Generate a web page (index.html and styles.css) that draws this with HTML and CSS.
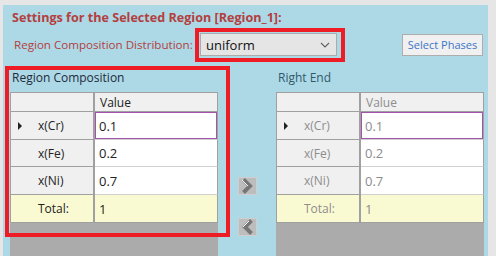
FILE: index.html
```html
<!DOCTYPE html>
<html lang="en">
<head>
    <meta charset="UTF-8">
    <title>Region Settings</title>
    <link rel="stylesheet" href="styles.css">
</head>
<body>
    <div class="window">
        <div class="panel">
            <div class="title">Settings for the Selected Region [Region_1]:</div>

            <div class="dist-row">
                <span class="dist-label">Region Composition Distribution:</span>
                <div class="select">
                    <span>uniform</span>
                    <svg width="10" height="6" viewBox="0 0 10 6"><path d="M1 1 L5 5 L9 1" fill="none" stroke="#606060" stroke-width="1.1"/></svg>
                </div>
                <button class="phases">Select Phases</button>
            </div>

            <div class="regions">
                <div class="group">
                    <div class="group-label">Region Composition</div>
                    <div class="grid">
                        <div class="table">
                            <div class="hd corner"></div>
                            <div class="hd">Value</div>

                            <div class="rh"><span class="marker on"></span>x(Cr)</div>
                            <div class="val focus">0.1</div>
                            <div class="rh"><span class="marker"></span>x(Fe)</div>
                            <div class="val">0.2</div>
                            <div class="rh"><span class="marker"></span>x(Ni)</div>
                            <div class="val">0.7</div>
                            <div class="rh total"><span class="marker"></span>Total:</div>
                            <div class="val total">1</div>
                        </div>
                    </div>
                </div>

                <div class="arrows">
                    <svg class="arrow" width="19" height="18" viewBox="0 0 19 18">
                        <rect x="0.5" y="0.5" width="18" height="17" fill="#bdbdbd" stroke="#cfcfcf"/>
                        <path d="M5.5 2.5 L12 9 L5.5 15.5" fill="none" stroke="#767676" stroke-width="4"/>
                        <path d="M4 3 L10 9" fill="none" stroke="#f4f4f4" stroke-width="1"/>
                    </svg>
                    <svg class="arrow" width="19" height="18" viewBox="0 0 19 18">
                        <rect x="0.5" y="0.5" width="18" height="17" fill="#bdbdbd" stroke="#cfcfcf"/>
                        <path d="M13.5 2.5 L7 9 L13.5 15.5" fill="none" stroke="#767676" stroke-width="4"/>
                        <path d="M5 9 L11 3" fill="none" stroke="#f4f4f4" stroke-width="1"/>
                    </svg>
                </div>

                <div class="group right">
                    <div class="group-label">Right End</div>
                    <div class="grid">
                        <div class="table">
                            <div class="hd corner"></div>
                            <div class="hd">Value</div>

                            <div class="rh"><span class="marker on"></span>x(Cr)</div>
                            <div class="val focus">0.1</div>
                            <div class="rh"><span class="marker"></span>x(Fe)</div>
                            <div class="val">0.2</div>
                            <div class="rh"><span class="marker"></span>x(Ni)</div>
                            <div class="val">0.7</div>
                            <div class="rh total"><span class="marker"></span>Total:</div>
                            <div class="val total">1</div>
                        </div>
                    </div>
                </div>
            </div>

            <!-- red highlight boxes drawn over the form -->
            <div class="mark mark-select"></div>
            <div class="mark mark-left"></div>
        </div>
    </div>
</body>
</html>
```

FILE: styles.css
```css
body {
    margin: 0;
    background: #e6e6e6;
    font-family: "Open Sans", "Noto Sans", sans-serif;
}

.window {
    width: 496px;
    height: 256px;
    box-sizing: border-box;
    padding: 5px 8px 0 3px;
    overflow: hidden;
}

.panel {
    position: relative;
    height: 100%;
    background: #add8e6;
}

.title {
    padding: 5px 0 0 9px;
    font-size: 12.6px;
    font-weight: 700;
    line-height: 16px;
    color: #b3403e;
}

.dist-row {
    display: flex;
    align-items: center;
    height: 23px;
    margin-top: 7px;
    padding: 0 5px 0 11px;
}

.dist-label {
    flex: none;
    width: 186px;
    font-size: 11.6px;
    color: #b3403e;
}

.select {
    display: flex;
    align-items: center;
    justify-content: space-between;
    width: 137px;
    height: 23px;
    box-sizing: border-box;
    padding: 0 6px 0 5px;
    border: 1px solid #acacac;
    background: #e5e5e5;
    font-size: 13px;
    color: #111;
}

.phases {
    margin-left: auto;
    width: 81px;
    height: 22px;
    padding: 0;
    border: 1px solid #adadad;
    background: #f0f0f0;
    font-family: "Open Sans", "Noto Sans", sans-serif;
    font-size: 11px;
    color: #3c74c8;
}

.regions {
    display: flex;
    margin-top: 14px;
    padding-left: 7px;
}

.group {
    display: flex;
    flex-direction: column;
    width: 208px;
}

.group-label {
    margin-bottom: 6px;
    padding-left: 2px;
    font-size: 12px;
    line-height: 16px;
    color: #1d2b3a;
}

.right .group-label {
    color: #2e5a6a;
}

.grid {
    height: 170px;
    background: #ababab;
}

.table {
    display: grid;
    grid-template-columns: 85px 123px;
    grid-template-rows: 20px 28px 27px 28px 28px;
    font-size: 12px;
    color: #222;
}

.hd {
    display: flex;
    align-items: center;
    box-sizing: border-box;
    padding-left: 5px;
    background: #f0f0f0;
    border-top: 1px solid #a0a0a0;
    border-bottom: 1px solid #a0a0a0;
    border-right: 1px solid #a0a0a0;
}

.hd.corner {
    border-left: 1px solid #a0a0a0;
    border-right-width: 2px;
}

.rh {
    display: flex;
    align-items: center;
    box-sizing: border-box;
    padding-left: 7px;
    background: #f0f0f0;
    border-left: 1px solid #a0a0a0;
    border-right: 2px solid #a0a0a0;
    border-bottom: 1px solid #a0a0a0;
}

.marker {
    width: 0;
    height: 0;
    margin-right: 16px;
    border-left: 4px solid transparent;
    border-top: 4px solid transparent;
    border-bottom: 4px solid transparent;
}

.marker.on {
    border-left-color: #222;
}

.val {
    display: flex;
    align-items: center;
    box-sizing: border-box;
    padding-left: 4px;
    background: #fff;
    border-right: 1px solid #a0a0a0;
    border-bottom: 1px solid #d0d0d0;
    font-size: 13px;
}

.val.focus {
    box-shadow: inset 0 0 0 1px #a552ad;
}

.total {
    background: #fafad2;
    border-bottom-color: #a0a0a0;
}

.right .table {
    color: #8d8d8d;
}

.arrows {
    display: flex;
    flex-direction: column;
    align-items: center;
    gap: 23px;
    width: 58px;
    padding-top: 107px;
}

.mark {
    position: absolute;
    box-sizing: border-box;
    border: 4px solid #ee1c24;
}

.mark-select {
    left: 192px;
    top: 23px;
    width: 150px;
    height: 34px;
}

.mark-left {
    left: 2px;
    top: 61px;
    width: 225px;
    height: 171px;
}
```
